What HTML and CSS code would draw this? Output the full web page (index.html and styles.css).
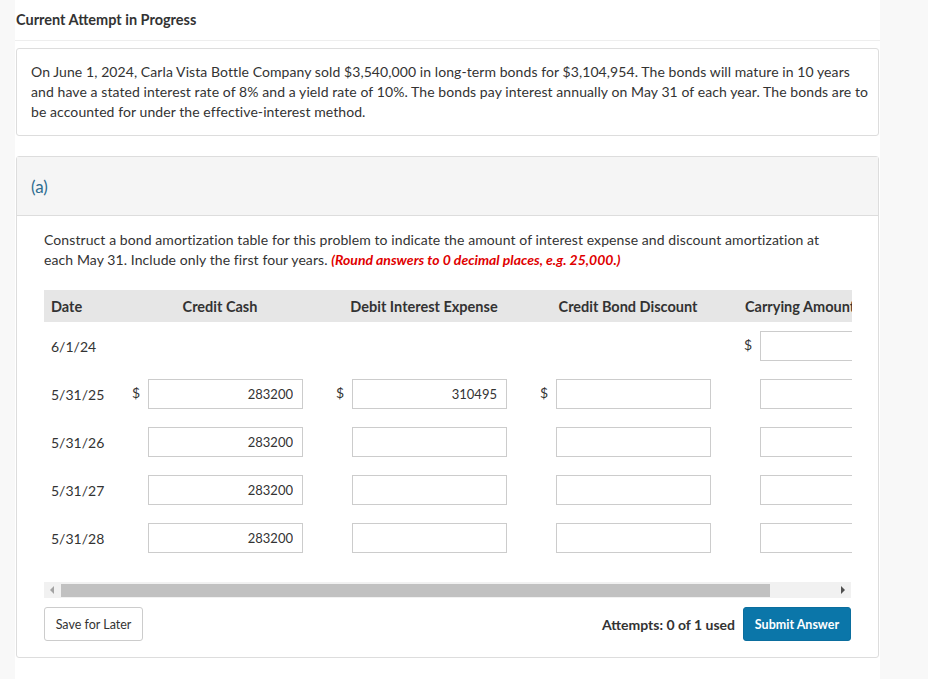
FILE: index.html
```html
<!DOCTYPE html>
<html lang="en">
<head>
    <meta charset="UTF-8">
    <meta name="viewport" content="width=device-width, initial-scale=1.0">
    <title>Current Attempt in Progress</title>
    <link rel="stylesheet" href="styles.css">
</head>
<body>
    <div class="page">
        <div class="attempt-title">Current Attempt in Progress</div>

        <div class="problem">
            On June 1, 2024, Carla Vista Bottle Company sold $3,540,000 in long-term bonds for $3,104,954. The bonds will mature in 10 years and have a stated interest rate of 8% and a yield rate of 10%. The bonds pay interest annually on May 31 of each year. The bonds are to be accounted for under the effective-interest method.
        </div>

        <div class="part">
            <div class="part-head">(a)</div>
            <div class="part-body">
                <p class="instructions">Construct a bond amortization table for this problem to indicate the amount of interest expense and discount amortization at each May 31. Include only the first four years. <span class="hint">(Round answers to 0 decimal places, e.g. 25,000.)</span></p>

                <div class="table-wrap">
                    <table class="amort">
                        <colgroup>
                            <col class="col-date">
                            <col class="col-amt">
                            <col class="col-amt">
                            <col class="col-amt">
                            <col class="col-amt">
                        </colgroup>
                        <thead>
                            <tr>
                                <th class="date">Date</th>
                                <th>Credit Cash</th>
                                <th>Debit Interest Expense</th>
                                <th>Credit Bond Discount</th>
                                <th class="last">Carrying Amount</th>
                            </tr>
                        </thead>
                        <tbody>
                            <tr>
                                <td class="date">6/1/24</td>
                                <td></td>
                                <td></td>
                                <td></td>
                                <td><span class="cur">$</span><input type="text"></td>
                            </tr>
                            <tr>
                                <td class="date">5/31/25</td>
                                <td><span class="cur">$</span><input type="text" value="283200"></td>
                                <td><span class="cur">$</span><input type="text" value="310495"></td>
                                <td><span class="cur">$</span><input type="text"></td>
                                <td><span class="cur"></span><input type="text"></td>
                            </tr>
                            <tr>
                                <td class="date">5/31/26</td>
                                <td><span class="cur"></span><input type="text" value="283200"></td>
                                <td><span class="cur"></span><input type="text"></td>
                                <td><span class="cur"></span><input type="text"></td>
                                <td><span class="cur"></span><input type="text"></td>
                            </tr>
                            <tr>
                                <td class="date">5/31/27</td>
                                <td><span class="cur"></span><input type="text" value="283200"></td>
                                <td><span class="cur"></span><input type="text"></td>
                                <td><span class="cur"></span><input type="text"></td>
                                <td><span class="cur"></span><input type="text"></td>
                            </tr>
                            <tr>
                                <td class="date">5/31/28</td>
                                <td><span class="cur"></span><input type="text" value="283200"></td>
                                <td><span class="cur"></span><input type="text"></td>
                                <td><span class="cur"></span><input type="text"></td>
                                <td><span class="cur"></span><input type="text"></td>
                            </tr>
                        </tbody>
                    </table>
                </div>

                <div class="scrollbar">
                    <span class="arrow left"></span>
                    <span class="thumb"></span>
                    <span class="arrow right"></span>
                </div>

                <div class="actions">
                    <button class="btn-save">Save for Later</button>
                    <div class="submit-group">
                        <span class="attempts">Attempts: 0 of 1 used</span>
                        <button class="btn-submit">Submit Answer</button>
                    </div>
                </div>
            </div>
        </div>
    </div>
</body>
</html>
```

FILE: styles.css
```css
body{
    margin:0;
    background:#f8f8f8;
    font-family: Lato, "Open Sans", sans-serif;
    font-size:14px;
    color:#333;
}

.page{
    width:865px;
    margin-left:15px;
    min-height:679px;
    background:#fff;
}

.attempt-title{
    font-weight:bold;
    font-size:14.5px;
    line-height:18px;
    padding:11px 1px;
    border-bottom:1px solid #eee;
}

.problem{
    margin:7px 1px 0;
    border:1px solid #ddd;
    border-radius:3px;
    padding:13px 8px 13px 14px;
    line-height:20px;
    letter-spacing:0.08px;
}

.part{
    margin:20px 1px 0;
    border:1px solid #ddd;
    border-radius:3px;
}

.part-head{
    height:58px;
    background:#f5f5f5;
    border-bottom:1px solid #ddd;
    padding-left:14px;
    display:flex;
    align-items:center;
    color:#2e6d90;
    font-size:17px;
}

.part-body{
    padding:14px 27px 16px;
}

.instructions{
    max-width:800px;
    margin:0 0 20px;
    line-height:20px;
    letter-spacing:0.09px;
}

.hint{
    color:#e00000;
    font-weight:bold;
    font-style:italic;
    letter-spacing:0;
}

.table-wrap{
    width:808px;
    overflow:hidden;
}

.amort{
    border-collapse:collapse;
    table-layout:fixed;
    width:896px;
}

.col-date{ width:80px; }
.col-amt{ width:204px; }

.amort th{
    background:#e6e6e6;
    height:32px;
    padding:0 23px 0 11px;
    font-size:14.5px;
    font-weight:bold;
    text-align:center;
    white-space:nowrap;
}

.amort th.last{
    text-align:left;
    padding-left:9px;
}

.amort td{
    height:48px;
    padding:0 0 0 8px;
    white-space:nowrap;
}

.amort .date{
    text-align:left;
    padding-left:7px;
}

.cur{
    display:inline-block;
    width:16px;
}

.amort input{
    box-sizing:border-box;
    width:155px;
    height:30px;
    border:1px solid #ccc;
    padding:0 9px;
    font-family:inherit;
    font-size:13px;
    color:#333;
    text-align:right;
    vertical-align:middle;
}

.scrollbar{
    margin-top:20px;
    height:16px;
    background:#f1f1f1;
    display:flex;
    align-items:center;
}

.arrow{
    width:16px;
    height:16px;
    display:flex;
    align-items:center;
    justify-content:center;
}

.arrow::before{
    content:"";
    border-top:4px solid transparent;
    border-bottom:4px solid transparent;
}

.arrow.left::before{ border-right:4px solid #a3a3a3; }
.arrow.right{ margin-left:auto; }
.arrow.right::before{ border-left:4px solid #505050; }

.thumb{
    width:709px;
    height:13px;
    margin-left:1px;
    background:#c1c1c1;
}

.actions{
    margin-top:9px;
    display:flex;
    justify-content:space-between;
    align-items:center;
}

.actions button{
    height:34px;
    border-radius:3px;
    font-family:inherit;
    font-size:12.5px;
    cursor:pointer;
}

.btn-save{
    width:99px;
    background:#fff;
    border:1px solid #ccc;
    color:#333;
}

.submit-group{
    display:flex;
    align-items:center;
    gap:8px;
}

.attempts{
    font-weight:bold;
    font-size:14px;
}

.btn-submit{
    width:108px;
    background:#0b76a9;
    border:1px solid #0b6e9e;
    color:#fff;
    font-weight:bold;
}
```
